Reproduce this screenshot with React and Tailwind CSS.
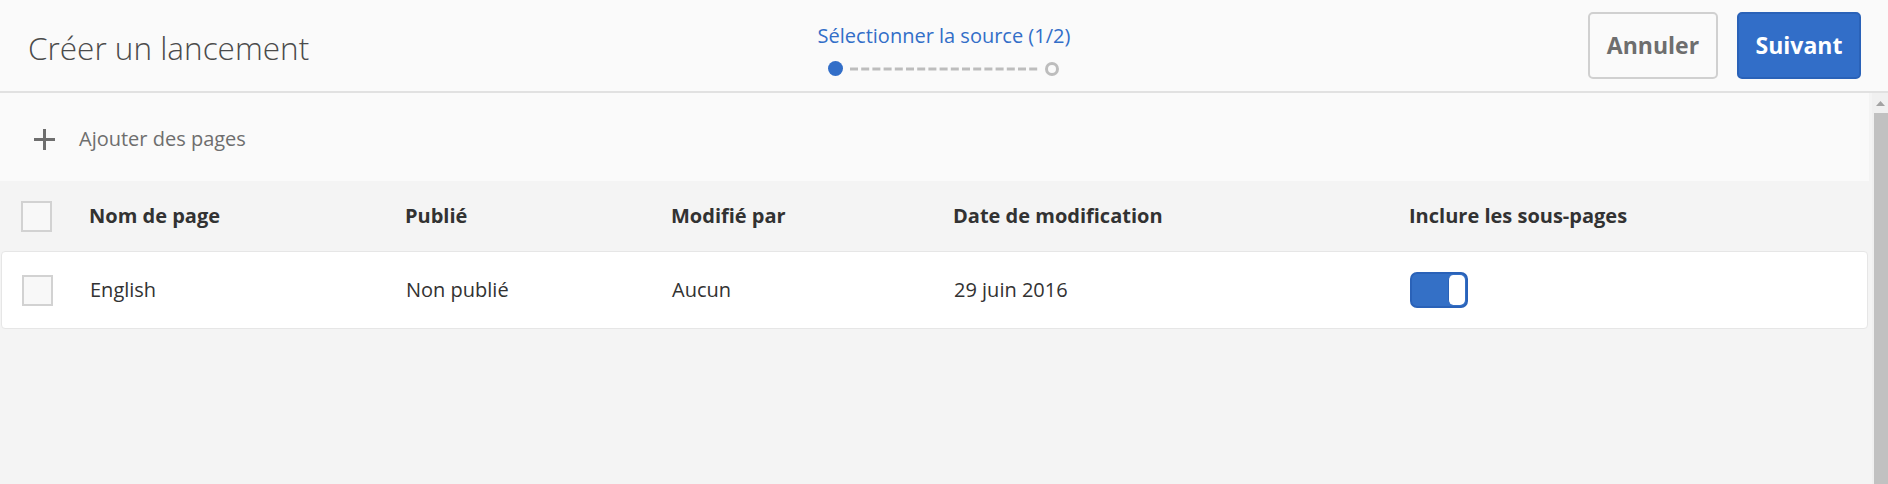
import React from 'react';

const FONT = { fontFamily: '"Open Sans", "Liberation Sans", sans-serif' };

function Checkbox() {
  return <div className="h-[31px] w-[31px] border-2 border-[#d2d2d2] bg-[#f8f8f8]" />;
}

function Stepper() {
  return (
    <div className="flex flex-col items-center pt-[22px]">
      <div className="text-[20px] leading-[27px] text-[#326ec8]">Sélectionner la source (1/2)</div>
      <div className="mt-[12px] flex items-center">
        <div className="h-[15px] w-[15px] rounded-full bg-[#326ec8]" />
        <svg width="188" height="4" className="mx-[7px]">
          <line x1="0" y1="2" x2="188" y2="2" stroke="#bdbdbd" strokeWidth="3" strokeDasharray="8 3.2" />
        </svg>
        <div className="h-[14px] w-[14px] rounded-full border-[3px] border-[#bdbdbd]" />
      </div>
    </div>
  );
}

function Toggle() {
  return (
    <div className="flex h-[36px] w-[58px] justify-end rounded-[7px] border-2 border-[#2a62b8] bg-[#3470c6] p-px">
      <div className="h-full w-[17px] rounded-[5px] border-l border-[#2a62b8] bg-white" />
    </div>
  );
}

// column widths line the header and rows up
const cols = ['w-[316px]', 'w-[266px]', 'w-[282px]', 'w-[456px]'];

export default function App() {
  const headers = ['Nom de page', 'Publié', 'Modifié par', 'Date de modification'];
  const row = ['English', 'Non publié', 'Aucun', '29 juin 2016'];

  return (
    <div style={FONT} className="flex h-[484px] w-[1888px] flex-col overflow-hidden bg-[#f4f4f4]">
      {/* Header */}
      <header className="grid h-[93px] shrink-0 grid-cols-[1fr_auto_1fr] border-b-2 border-[#e1e1e1] bg-[#fafafa]">
        <h1 className="self-center pl-[28px] pt-[5px] text-[31.5px] font-light text-[#4b4b4b]">Créer un lancement</h1>
        <Stepper />
        <div className="flex items-center justify-end gap-[19px] pr-[27px]">
          <button className="h-[67px] w-[130px] rounded-[5px] border-2 border-[#d0d0d0] bg-[#fafafa] text-[23px] font-bold text-[#6e6e6e]">
            Annuler
          </button>
          <button className="h-[67px] w-[124px] rounded-[5px] border-2 border-[#2a62b8] bg-[#326ec8] text-[23px] font-bold text-white">
            Suivant
          </button>
        </div>
      </header>

      <div className="flex min-h-0 flex-1">
        <div className="flex min-w-0 flex-1 flex-col pr-[3px]">
          {/* Add pages */}
          <div className="flex h-[88px] shrink-0 items-center gap-[24px] bg-[#fafafa] pl-[34px] pt-[4px]">
            <svg width="21" height="21" viewBox="0 0 21 21">
              <rect x="9" y="0" width="3" height="21" fill="#6e6e6e" />
              <rect x="0" y="9" width="21" height="3" fill="#6e6e6e" />
            </svg>
            <span className="text-[20px] text-[#6e6e6e]">Ajouter des pages</span>
          </div>

          {/* Table header */}
          <div className="flex h-[70px] shrink-0 items-center bg-[#f4f4f4] text-[20px] font-bold text-[#323232]">
            <div className="w-[89px] pl-[21px]">
              <Checkbox />
            </div>
            {headers.map((h, i) => (
              <div key={h} className={cols[i]}>{h}</div>
            ))}
            <div className="flex-1">Inclure les sous-pages</div>
          </div>

          {/* Row */}
          <div className="mx-px flex h-[78px] shrink-0 items-center rounded-[4px] border border-[#e6e6e6] bg-white text-[20px] text-[#323232]">
            <div className="w-[88px] pl-[20px]">
              <Checkbox />
            </div>
            {row.map((c, i) => (
              <div key={c} className={cols[i]}>{c}</div>
            ))}
            <div className="flex-1">
              <Toggle />
            </div>
          </div>
        </div>

        {/* Scrollbar */}
        <div className="flex w-[16px] shrink-0 flex-col bg-[#f0f0f0]">
          <div className="flex h-[20px] items-center justify-center">
            <svg width="9" height="5" viewBox="0 0 9 5">
              <polygon points="0,5 4.5,0 9,5" fill="#a3a3a3" />
            </svg>
          </div>
          <div className="ml-[2px] flex-1 bg-[#c1c1c1]" />
        </div>
      </div>
    </div>
  );
}
